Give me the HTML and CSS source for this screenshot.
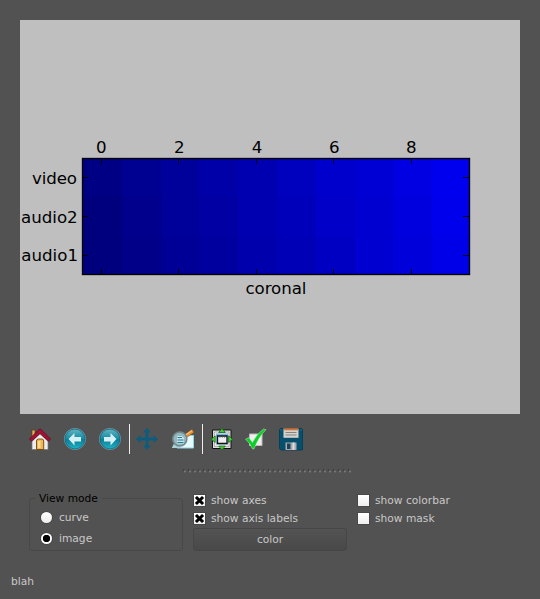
FILE: index.html
```
<!DOCTYPE html>
<html lang="en">
<head>
<meta charset="utf-8">
<title>View</title>
<link rel="stylesheet" href="styles.css">
</head>
<body>
<main class="window">
  <svg class="figure" viewBox="20 20 500 394" role="img" aria-label="coronal">
    <g id="cells" shape-rendering="crispEdges"></g>
    <path class="ticks" d="M101.5 159v5m77-5v5m78-5v5m77-5v5m78-5v5M101.5 274v-5m77 5v-5m78 5v-5m77 5v-5m78 5v-5M83 177.5h5m-5 39h5m-5 39h5M469 177.5h-6m6 39h-6m6 39h-6"/>
    <rect class="frame" x="82.5" y="158.5" width="387" height="116"/>
    <g class="plot-text" text-anchor="middle">
      <text x="101.3" y="153">0</text><text x="179.2" y="153">2</text><text x="257" y="153">4</text><text x="334.2" y="153">6</text><text x="411.3" y="153">8</text>
      <text x="276" y="294" textLength="61">coronal</text>
    </g>
    <g class="plot-text" text-anchor="end">
      <text x="77" y="184" textLength="45">video</text><text x="77.7" y="223">audio2</text><text x="78" y="261">audio1</text>
    </g>
  </svg>

  <nav class="toolbar">
    <svg class="icon" viewBox="0 0 24 24">
      <path d="M4 3h3v8H4z" fill="#e9b45a" stroke="#5b3510" stroke-width=".7"/>
      <path d="M4 12l8-8 8 8v10.500H4z" fill="#eee" stroke="#777" stroke-width=".7"/>
      <path d="M4 12L12 5l8 7v3l-8-7.500L4 15z" fill="#aaa"/>
      <path d="M1.500 12L11.500 2h1L22.500 12l-2 2.200-8.500-7.700-8.500 7.700z" fill="#a31232" stroke="#620b20" stroke-width=".8"/>
      <path d="M8.500 22.500v-8.500q0-2 2-2h3.200q2 0 2 2v8.500z" fill="#f2b84d" stroke="#704214" stroke-width=".9"/>
      <path d="M10 21v-7h2.500v7z" fill="#ffdd93"/>
    </svg>
    <svg class="icon" viewBox="0 0 24 24">
      <use href="#ball"/><path d="M5.500 12l6-6v4H18v4.500h-6.500v4z" fill="#d5f0f3"/>
    </svg>
    <svg class="icon" viewBox="0 0 24 24">
      <defs>
        <linearGradient id="teal" x2="0" y2="1"><stop stop-color="#68b7c5"/><stop offset=".48" stop-color="#168ba1"/><stop offset=".5" stop-color="#087c95"/><stop offset="1" stop-color="#22b5c8"/></linearGradient>
        <g id="ball"><circle cx="12" cy="12" r="10.600" fill="url(#teal)" stroke="#78939c" stroke-width=".9"/><circle cx="12" cy="12" r="9.900" fill="none" stroke="#126b84" stroke-width=".8"/></g>
      </defs>
      <use href="#ball"/><path d="M18.500 12l-6-6v4H6v4.500h6.500v4z" fill="#d5f0f3"/>
    </svg>
    <i class="separator"></i>
    <svg class="icon move" viewBox="0 0 24 24">
      <path d="M12 1l4 4.500h-2.500v5h5V8l4.500 4-4.500 4v-2.500h-5v5H16L12 23l-4-4.500h2.500v-5h-5V16L1 12l4.500-4v2.500h5v-5H8z" fill="#0d5c7d"/>
    </svg>
    <svg class="icon" viewBox="0 0 24 24">
      <path d="M6 8.500h16.500v12.500H6z" fill="#e7fafb" stroke="#8dd7e5"/>
      <path d="M13.500 8l7.500-5.500 2 2.800-8 5.700z" fill="#ed902b" stroke="#8b542c" stroke-width=".6"/>
      <path d="M14.500 8l6.500-4.500" stroke="#ffc06b" stroke-width="1.400"/>
      <path d="M1 20.500l2-4 8 4.500H1z" fill="#a9d2d8"/>
      <circle cx="8.800" cy="12" r="7" fill="#94b8be" stroke="#71888d" stroke-width="1.600"/>
      <path d="M6 9h5l2 2v5.500H6z" fill="#c4e5e9"/>
      <path d="M6.500 10.500h4.500m-4.500 2.500h6m-6 2.500h6" stroke="#287b91"/>
    </svg>
    <i class="separator second"></i>
    <svg class="icon config" viewBox="0 0 24 24">
      <path d="M2.500 3h18.500v18.500H2.500z" fill="#ddd" stroke="#111"/>
      <path d="M4.500 5h14.500v14.500H4.500z" fill="#eee" stroke="#999" stroke-width=".7"/>
      <path d="M6 6.500h12v11H6z" fill="#79b5e8"/>
      <path d="M7.500 9h9.500v7.500H7.500z" fill="#eee" stroke="#111" stroke-width="1.300"/>
      <path d="M9.500 9.500h1v1h-1zm2.300 0h1v1h-1zm2.300 0h1v1h-1z" fill="#444"/>
      <path d="M12 1.500l3.300 4H8.700zM12 23l-3.300-4h6.600zM1.200 12.200l4-3.300v6.600zM22.600 12.200l-4 3.300V8.900z" fill="#4dcb38" stroke="#126b13" stroke-width=".8"/>
    </svg>
    <svg class="icon check" viewBox="0 0 24 24">
      <path d="M5.500 7h12.500v11.500H5.500z" fill="#eee" stroke="#bbb"/>
      <path d="M1.500 12.200l3.500-1.700 3.500 5Q13 6.500 19.500 2l2.500.7Q14.500 10 10 22H8.500Q6 16 1.500 12.200z" fill="#0bcf27" stroke="#e6f4e5" stroke-width=".4"/>
    </svg>
    <svg class="icon" viewBox="0 0 24 24">
      <path d="M1.500 1.500h21l1 1v20.500H2L.500 21.500v-19z" fill="#07506d" stroke="#063f57"/>
      <path d="M4.500 1.800h15v9h-15z" fill="#d5d3cc"/><path d="M4.500 1.300h15v2h-15z" fill="#d27238"/>
      <path d="M6.500 5.500h11m-11 2.500h11" stroke="#858585"/>
      <path d="M6.500 15.500h11v7.500h-11z" fill="#aaa"/><path d="M8 16.500h3.500V22H8z" fill="#17445c"/><path d="M13.500 15.500h2V23h-2z" fill="#ddd"/>
      <path d="M1.500 2.500h1v1h-1zm20 0h1v1h-1z" fill="#40819a"/>
    </svg>
  </nav>

  <div class="splitter"></div>

  <section class="controls">
    <fieldset class="mode">
      <legend>View mode</legend>
      <label class="option"><i class="radio"></i><span>curve</span></label>
      <label class="option"><i class="radio selected"></i><span>image</span></label>
    </fieldset>
    <div class="middle">
      <label class="option"><i class="box"><svg viewBox="0 0 11 11"><path d="M3 3l5 5M8 3L3 8"/></svg></i><span>show axes</span></label>
      <label class="option"><i class="box"><svg viewBox="0 0 11 11"><path d="M3 3l5 5M8 3L3 8"/></svg></i><span>show axis labels</span></label>
      <button class="color">color</button>
    </div>
    <div class="right">
      <label class="option"><i class="box"></i><span>show colorbar</span></label>
      <label class="option"><i class="box"></i><span>show mask</span></label>
    </div>
  </section>
  <footer class="status">blah</footer>
</main>
<script src="plot.js"></script>
</body>
</html>
```
FILE: styles.css
```
* { box-sizing: border-box; }
body { margin: 0; background: #525252; }
.window {
  display: flex; flex-direction: column;
  width: 540px; height: 599px; padding: 20px 20px 0;
  background: #525252; color: #c8c8c8;
  font: 10.67px/18px "DejaVu Sans", sans-serif;
}
.figure { display: block; flex: none; width: 500px; height: 394px; background: #bfbfbf; }
.frame { fill: none; stroke: #000; stroke-width: 1.35px; }
.ticks { fill: none; stroke: #000; stroke-width: .9px; }
.plot-text { fill: #000; font: 16.67px "DejaVu Sans", sans-serif; }
.toolbar { display: flex; align-items: center; height: 50px; padding-left: 8px; }
.icon { flex: none; width: 24px; height: 24px; margin-right: 11px; }
.separator { width: 1px; height: 30px; margin: 0 6px 0 -4px; background: #eee; }
.move { margin-left: -1px; margin-right: 12px; }
.second { margin-right: 7px; margin-left: -4px; }
.config { margin-right: 10px; }
.check { margin-right: 11px; }
.splitter {
  width: 170px; height: 4px; margin: 5px 0 1px 162px;
  background:
    radial-gradient(circle at 3px 2.5px, #777 0 .8px, transparent 1.3px) 0 0 / 5px 4px,
    radial-gradient(circle at 1.5px 1px, #404040 0 .8px, transparent 1.2px) 0 0 / 5px 4px;
}
.controls { display: grid; grid-template-columns: 154px 154px 1fr; gap: 10px; height: 61px; margin: 16px 0 0 9px; }
.mode { min-width: 0; height: 61px; margin: 0; padding: 0 0 0 11px; border: 1px solid #484848; border-radius: 3px; }
.mode legend { height: 16px; padding: 0 4px; margin-left: -6px; color: #000; line-height: 18px; }
.mode .option { height: 21px; line-height: 21px; gap: 7px; }
.option { display: flex; align-items: center; height: 18px; gap: 6px; }
.option span { padding-top: 2px; }
.radio { width: 11px; height: 11px; margin-top: 1px; border-radius: 50%; background: linear-gradient(#fff, #eee); box-shadow: 0 0 0 1px #484848; }
.selected { background: radial-gradient(circle, #000 0 3.4px, #fff 4px); }
.box { width: 11px; height: 11px; background: linear-gradient(#fff, #eee); box-shadow: 0 0 0 1px #484848; }
.box svg { display: block; width: 11px; height: 11px; fill: none; stroke: #000; stroke-width: 3; stroke-linecap: square; }
.middle, .right { padding-top: 1px; }
.middle .option, .right .option { padding-left: 1px; }
.color {
  display: block; width: 154px; height: 23px; margin: 1px 0 0; padding: 0;
  border: 1px solid #464646; border-radius: 3px;
  background: linear-gradient(#535353, #494949); color: inherit; font: inherit;
}
.status { margin: 22px 0 0 -9px; }
```
FILE: plot.js
```
const rows = [
  [132, 145, 154, 168, 177, 191, 204, 213, 227, 238],
  [127, 141, 154, 163, 177, 186, 200, 209, 222, 236],
  [127, 136, 150, 159, 172, 182, 195, 209, 218, 232]
];
const xs = [83, 122, 161, 199, 238, 277, 316, 355, 393, 432, 469];
const ys = [159, 196, 237, 274];
const cells = document.getElementById("cells");
rows.forEach((row, r) => row.forEach((blue, c) => {
  const cell = document.createElementNS("http://www.w3.org/2000/svg", "rect");
  cell.setAttribute("x", xs[c]);
  cell.setAttribute("y", ys[r]);
  cell.setAttribute("width", xs[c + 1] - xs[c]);
  cell.setAttribute("height", ys[r + 1] - ys[r]);
  cell.setAttribute("fill", `rgb(0,0,${blue})`);
  cells.append(cell);
}));
```
